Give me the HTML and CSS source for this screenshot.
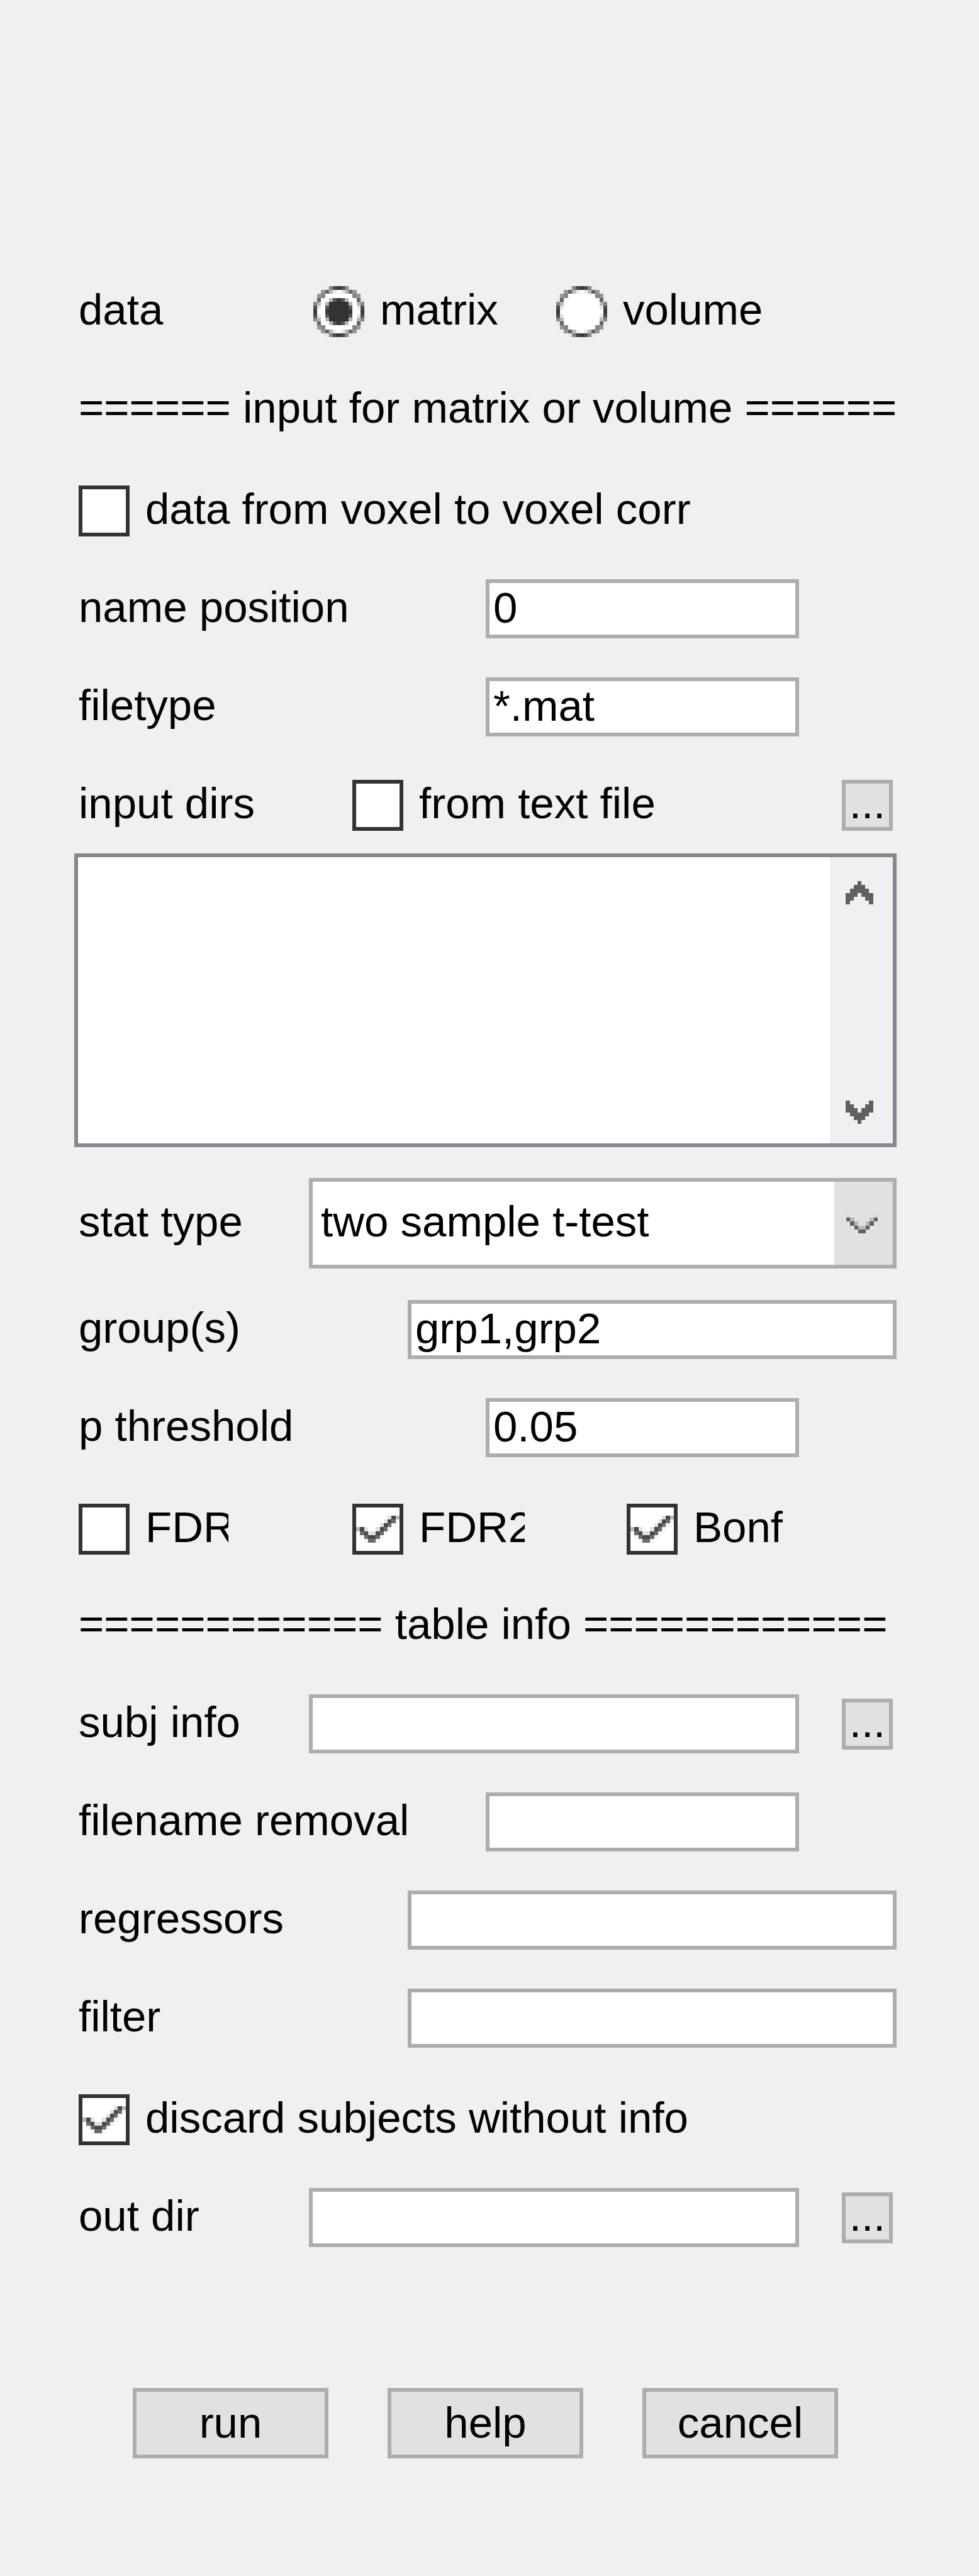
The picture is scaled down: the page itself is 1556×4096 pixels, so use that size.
FILE: index.html
```html
<!DOCTYPE html>
<html lang="en">
<head>
<meta charset="utf-8">
<title>statistics</title>
<link rel="stylesheet" href="styles.css">
</head>
<body>
<svg class="sprites" aria-hidden="true">
  <symbol id="ring" viewBox="0 0 13 13">
    <path fill="#fff" d="M3 1h7v1h1v1h1v7h-1v1h-1v1h-7v-1h-1v-1h-1v-7h1v-1h1z"/>
    <path stroke="#383838" d="M6 .5h1M6 12.5h1M0 6.5h1M12 6.5h1"/>
    <path stroke="#4b4b4b" d="M5 .5h1M7 .5h1M5 12.5h1M7 12.5h1M0 5.5h1M12 5.5h1M0 7.5h1M12 7.5h1"/>
    <path stroke="#868686" d="M4 .5h1M8 .5h1M4 12.5h1M8 12.5h1M0 4.5h1M12 4.5h1M0 8.5h1M12 8.5h1M2 2.5h1M10 2.5h1M2 10.5h1M10 10.5h1"/>
    <path stroke="#979797" d="M2 1.5h1M10 1.5h1M1 2.5h1M11 2.5h1M1 10.5h1M11 10.5h1M2 11.5h1M10 11.5h1"/>
    <path stroke="#646464" d="M3 1.5h1M9 1.5h1M1 3.5h1M11 3.5h1M1 9.5h1M11 9.5h1M3 11.5h1M9 11.5h1"/>
    <path stroke="#b8b8b8" d="M4 1.5h1M8 1.5h1M1 4.5h1M11 4.5h1M1 8.5h1M11 8.5h1M4 11.5h1M8 11.5h1"/>
    <path stroke="#e8e8e8" d="M5 1.5h1M7 1.5h1M1 5.5h1M11 5.5h1M1 7.5h1M11 7.5h1M5 11.5h1M7 11.5h1M3 .5h1M9 .5h1M3 12.5h1M9 12.5h1M0 3.5h1M0 9.5h1M12 3.5h1M12 9.5h1"/>
  </symbol>
  <symbol id="dot" viewBox="0 0 13 13">
    <path fill="#333" d="M4 4h5v5h-5z"/>
    <path stroke="#383838" d="M6 3.5h1M6 9.5h1M3 6.5h1M9 6.5h1"/>
    <path stroke="#555" d="M5 3.5h1M7 3.5h1M5 9.5h1M7 9.5h1M3 5.5h1M9 5.5h1M3 7.5h1M9 7.5h1"/>
    <path stroke="#b8b8b8" d="M4 3.5h1M8 3.5h1M4 9.5h1M8 9.5h1M3 4.5h1M9 4.5h1M3 8.5h1M9 8.5h1"/>
  </symbol>
  <symbol id="tick" viewBox="0 0 11 11">
    <path stroke="#484848" d="M9 2.5h1M8 3.5h1M7 4.5h1M6 5.5h1M1 5.5h1M5 6.5h1M2 6.5h1M3 7.5h2"/>
    <path stroke="#6c6c6c" d="M9 3.5h1M8 4.5h1M7 5.5h1M6 6.5h1M1 6.5h1M5 7.5h1M2 7.5h1M3 8.5h2"/>
    <path stroke="#b8b8b8" d="M10 2.5h1M0 5.5h1"/>
    <path stroke="#e0e0e0" d="M8 2.5h1M7 3.5h1M6 4.5h1M5 5.5h1M2 5.5h1M3 6.5h2"/>
    <path stroke="#f5f5f5" d="M10 3.5h1M9 4.5h1M8 5.5h1M7 6.5h1M6 7.5h1M1 7.5h1M5 8.5h1M2 8.5h1"/>
  </symbol>
  <symbol id="up" viewBox="0 0 7 6">
    <path fill="#606060" d="M3 0h1v1h1v1h1v1h1v3h-1v-1h-1v-1h-1v-1h-1v1h-1v1h-1v1h-1v-3h1v-1h1v-1h1z"/>
  </symbol>
  <symbol id="down" viewBox="0 0 7 6">
    <path fill="#606060" d="M3 6h1v-1h1v-1h1v-1h1v-3h-1v1h-1v1h-1v1h-1v-1h-1v-1h-1v-1h-1v3h1v1h1v1h1z"/>
  </symbol>
  <symbol id="drop" viewBox="0 0 8 5">
    <path stroke="#606060" d="M0 1.5h1M7 1.5h1M1 2.5h1M6 2.5h1M2 3.5h1M5 3.5h1M3 4.5h2"/>
    <path stroke="#b8b8b8" d="M1 1.5h1M6 1.5h1M2 2.5h1M5 2.5h1M3 3.5h2"/>
    <path stroke="#dadada" d="M0 .5h1M7 .5h1"/>
  </symbol>
</svg>

<form class="dialog">
  <section class="group">
    <div class="row row-data" role="radiogroup" aria-label="data">
      <span class="text">data</span>
      <label class="option"><span class="mark"><input class="radio" type="radio" name="data" checked><svg class="glyph"><use href="#ring"/></svg><svg class="glyph glyph-on"><use href="#dot"/></svg></span><span class="text">matrix</span></label>
      <label class="option"><span class="mark"><input class="radio" type="radio" name="data"><svg class="glyph"><use href="#ring"/></svg><svg class="glyph glyph-on"><use href="#dot"/></svg></span><span class="text">volume</span></label>
    </div>
    <div class="row"><span class="text">====== input for matrix or volume ======</span></div>
    <div class="row row-after">
      <label class="option"><span class="mark"><input class="box" type="checkbox"><svg class="glyph glyph-on glyph-tick"><use href="#tick"/></svg></span><span class="text">data from voxel to voxel corr</span></label>
    </div>
    <div class="row row-short">
      <label class="text" for="position">name position</label>
      <input class="field" id="position" type="text" value="0">
    </div>
    <div class="row row-short">
      <label class="text" for="filetype">filetype</label>
      <input class="field" id="filetype" type="text" value="*.mat">
    </div>
    <div class="dirs">
      <div class="row row-dirs">
        <label class="text" for="dirs">input dirs</label>
        <label class="option"><span class="mark"><input class="box" type="checkbox"><svg class="glyph glyph-on glyph-tick"><use href="#tick"/></svg></span><span class="text">from text file</span></label>
        <button class="browse" type="button">...</button>
      </div>
      <div class="list">
        <textarea class="list-text" id="dirs"></textarea>
        <div class="scroll">
          <button class="scroll-button" type="button" aria-label="scroll up"><svg class="arrow"><use href="#up"/></svg></button>
          <button class="scroll-button" type="button" aria-label="scroll down"><svg class="arrow"><use href="#down"/></svg></button>
        </div>
      </div>
    </div>
    <div class="row row-stat">
      <label class="text" for="stat">stat type</label>
      <div class="combo">
        <select class="select" id="stat"><option>two sample t-test</option></select>
        <span class="combo-button"><svg class="combo-arrow"><use href="#drop"/></svg></span>
      </div>
    </div>
    <div class="row row-long">
      <label class="text" for="groups">group(s)</label>
      <input class="field" id="groups" type="text" value="grp1,grp2">
    </div>
    <div class="row row-short">
      <label class="text" for="threshold">p threshold</label>
      <input class="field" id="threshold" type="text" value="0.05">
    </div>
    <div class="row row-checks row-after">
      <label class="option"><span class="mark"><input class="box" type="checkbox"><svg class="glyph glyph-on glyph-tick"><use href="#tick"/></svg></span><span class="text cut-fdr">FDR</span></label>
      <label class="option"><span class="mark"><input class="box" type="checkbox" checked><svg class="glyph glyph-on glyph-tick"><use href="#tick"/></svg></span><span class="text cut-fdr2">FDR2</span></label>
      <label class="option"><span class="mark"><input class="box" type="checkbox" checked><svg class="glyph glyph-on glyph-tick"><use href="#tick"/></svg></span><span class="text">Bonf</span></label>
    </div>
  </section>

  <section class="group">
    <div class="row"><span class="text">============ table info ============</span></div>
    <div class="row row-path">
      <label class="text" for="subj">subj info</label>
      <input class="field" id="subj" type="text">
      <button class="browse" type="button">...</button>
    </div>
    <div class="row row-short">
      <label class="text" for="removal">filename removal</label>
      <input class="field" id="removal" type="text">
    </div>
    <div class="row row-long">
      <label class="text" for="regressors">regressors</label>
      <input class="field" id="regressors" type="text">
    </div>
    <div class="row row-long">
      <label class="text" for="filter">filter</label>
      <input class="field" id="filter" type="text">
    </div>
    <div class="row row-after">
      <label class="option"><span class="mark"><input class="box" type="checkbox" checked><svg class="glyph glyph-on glyph-tick"><use href="#tick"/></svg></span><span class="text">discard subjects without info</span></label>
    </div>
    <div class="row row-path">
      <label class="text" for="out">out dir</label>
      <input class="field" id="out" type="text">
      <button class="browse" type="button">...</button>
    </div>
  </section>

  <div class="actions">
    <button class="action" type="button">run</button>
    <button class="action" type="button">help</button>
    <button class="action" type="button">cancel</button>
  </div>
</form>
</body>
</html>
```

FILE: styles.css
```css
* {
  box-sizing: border-box;
}

body {
  margin: 0;
  background: #f0f0f0;
  color: #000;
  font: 69px/80px "Liberation Sans", Arial, sans-serif;
}

.sprites {
  display: none;
}

svg {
  shape-rendering: crispEdges;
}

input,
select,
textarea,
button {
  margin: 0;
  padding: 0;
  border-radius: 0;
  appearance: none;
  color: inherit;
  font: inherit;
}

.dialog {
  display: flex;
  flex-direction: column;
  gap: 60px;
  padding: 448px 131px 187px 125px;
}

.group {
  display: flex;
  flex-direction: column;
  gap: 62px;
}

/* Rows: the columns share the dialog's width in proportion */
.row {
  display: grid;
  align-items: center;
  min-height: 94px;
}

.row-after {
  margin-top: 5px;
}

.row-data {
  grid-template-columns: 373fr 386fr 541fr;
}

.row-short {
  grid-template-columns: 647fr 498fr 155fr;
}

.row-long {
  grid-template-columns: 523fr 777fr;
}

.row-path {
  grid-template-columns: 366fr 779fr 155fr;
}

.row-dirs {
  grid-template-columns: 435fr 710fr 155fr;
}

.row-checks {
  grid-template-columns: 435fr 436fr 429fr;
}

.row-stat {
  grid-template-columns: 366fr 934fr;
  margin: -13px 0 -12px;
}

.text {
  padding-bottom: 4px;
  white-space: nowrap;
}

/* Text boxes */
.field {
  width: 100%;
  min-width: 0;
  height: 94px;
  padding: 0 6px 4px;
  border: 6px solid #abadb3;
  background: #fff;
}

/* Tick boxes and radio buttons */
.option {
  display: flex;
  align-items: center;
  gap: 25px;
}

.mark {
  display: grid;
  flex: none;
  width: 81px;
  height: 81px;
}

.box,
.radio,
.glyph {
  grid-area: 1 / 1;
  width: 100%;
  height: 100%;
}

.box {
  border: 6px solid #333;
  background: #fff;
}

.glyph {
  pointer-events: none;
}

.glyph-on {
  visibility: hidden;
}

.glyph-tick {
  padding: 6px;
}

input:checked ~ .glyph-on {
  visibility: visible;
}

.cut-fdr,
.cut-fdr2 {
  overflow: hidden;
}

.cut-fdr {
  width: 132px;
}

.cut-fdr2 {
  width: 168px;
}

/* Buttons */
.browse,
.action {
  border: 6px solid #adadad;
  background: #e1e1e1;
  text-align: center;
}

.browse {
  justify-self: end;
  width: 81px;
  height: 81px;
  margin-right: 6px;
  padding-bottom: 4px;
  line-height: 64px;
}

.actions {
  display: grid;
  grid-template-columns: repeat(3, 1fr);
  gap: 94px;
  margin: 164px 93px 0 86px;
}

.action {
  height: 112px;
}

/* Directory list */
.dirs {
  display: flex;
  flex-direction: column;
  gap: 30px;
}

.list {
  display: flex;
  height: 467px;
  margin-left: -7px;
  border: 6px solid #828790;
  background: #fff;
}

.list-text {
  flex: 1;
  min-width: 0;
  border: 0;
  background: transparent;
  resize: none;
}

.scroll {
  display: flex;
  flex-direction: column;
  justify-content: space-between;
  width: 100px;
  padding: 38px 31px 31px 25px;
  background: #f0f0f0;
}

.scroll-button {
  height: 37px;
  border: 0;
  background: transparent;
}

.arrow {
  display: block;
  width: 44px;
  height: 37px;
}

/* Drop-down */
.combo {
  display: grid;
  height: 144px;
}

.select,
.combo-button {
  grid-area: 1 / 1;
}

.select {
  width: 100%;
  height: 100%;
  padding: 0 99px 4px 13px;
  border: 6px solid #abadb3;
  background: #fff;
}

.combo-button {
  display: flex;
  align-items: center;
  justify-self: end;
  width: 93px;
  margin: 6px;
  padding-left: 19px;
  background: #e1e1e1;
  pointer-events: none;
}

.combo-arrow {
  width: 50px;
  height: 31px;
}
```
